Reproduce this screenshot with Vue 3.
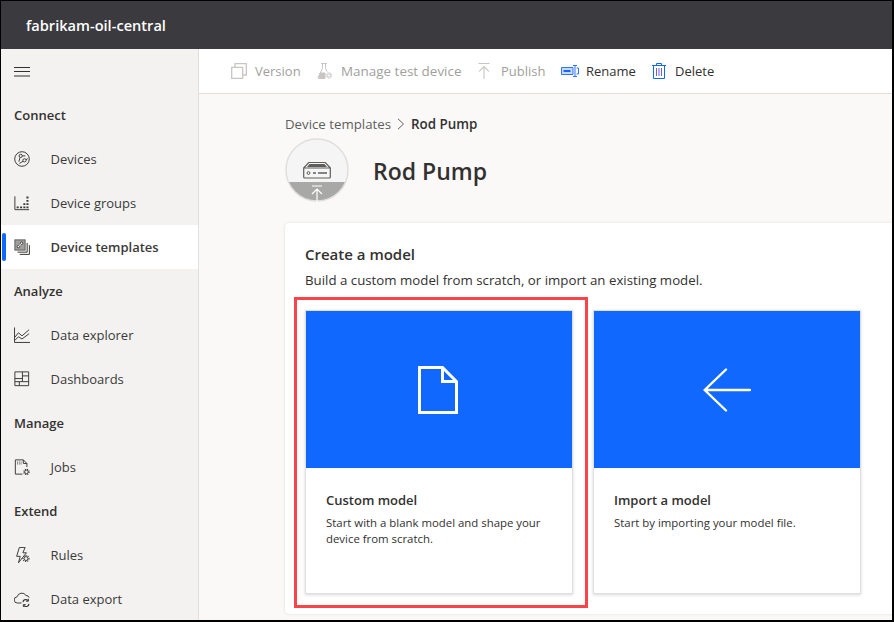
<script setup>
const sections = [
  { title: 'Connect', items: [
    { label: 'Devices', icon: 'devices' },
    { label: 'Device groups', icon: 'groups' },
    { label: 'Device templates', icon: 'templates', active: true }
  ]},
  { title: 'Analyze', items: [
    { label: 'Data explorer', icon: 'explorer' },
    { label: 'Dashboards', icon: 'dashboards' }
  ]},
  { title: 'Manage', items: [{ label: 'Jobs', icon: 'jobs' }] },
  { title: 'Extend', items: [
    { label: 'Rules', icon: 'rules' },
    { label: 'Data export', icon: 'export' }
  ]}
]
</script>

<template>
  <div class="frame">
    <header class="topbar"><span class="app-name">fabrikam-oil-central</span></header>
    <div class="body">
      <nav class="sidebar">
        <div class="row">
          <svg class="nav-icon menu-icon" viewBox="0 0 16 18" fill="none" stroke="#323130" stroke-width="1">
            <path d="M0 5.5h16M0 9.5h16M0 14h16" />
          </svg>
        </div>
        <template v-for="s in sections" :key="s.title">
          <div class="row section">{{ s.title }}</div>
          <div v-for="it in s.items" :key="it.label" class="row item" :class="{ active: it.active }">
            <svg class="nav-icon" viewBox="0 0 18 18" fill="none" stroke="#3b3a39" stroke-width="1.1">
              <g v-if="it.icon === 'devices'">
                <circle cx="9" cy="9" r="8.200" />
                <circle cx="7.500" cy="5.500" r="1.800" />
                <circle cx="11.800" cy="10.500" r="1.800" />
                <path d="M6.800 7.300 5.500 12M10.300 11.500 6 14M13.500 9.800 15.500 8.500M9.300 5.500h3.500" />
              </g>
              <g v-else-if="it.icon === 'groups'">
                <path d="M1 1.500v15h16" />
                <path d="M3 14h2.300M6.800 14h2.300M10.500 14h2.300M14 14h2.300M10.500 10.300h2.300M14 10.300h2.300M14 6.500h2.300M14 2.800h2.300" stroke-width="2" />
              </g>
              <g v-else-if="it.icon === 'templates'">
                <rect x="1" y="1" width="11.500" height="11.500" fill="#a19f9d" stroke="#605e5c" />
                <circle cx="5" cy="8.500" r="1.400" fill="#fff" />
                <circle cx="8.500" cy="4.800" r="1.400" fill="#fff" />
                <path d="M6 7.500 7.500 6" stroke="#fff" />
                <path d="M14.800 4.500v10.300H4M17.300 7v10.300H6.500" stroke="#323130" />
              </g>
              <g v-else-if="it.icon === 'explorer'">
                <path d="M.6 .5v16.900H18" />
                <path d="M1 11.500l4-5 4 3.500 8-7" />
                <path d="M1 15l4-4 4 2.500 8-6" />
              </g>
              <g v-else-if="it.icon === 'dashboards'">
                <path d="M1 1h15.500v15.500H1zM9.500 1v11M1 8.500h8.500M9.500 5.500h7M1 12h15.500M6 12v4.500" />
              </g>
              <g v-else-if="it.icon === 'jobs'">
                <path d="M1.500 17V1h9l4 4v4M1.500 17h8M10.500 1v4h4" />
                <path d="M3.500 3.500h5M3.500 5.500h5" stroke-dasharray="1 1" />
                <circle cx="14" cy="14.500" r="2" />
                <circle cx="14" cy="14.500" r="3" stroke-dasharray="1.300 1.100" stroke-width="1.200" />
              </g>
              <g v-else-if="it.icon === 'rules'">
                <path d="M6 .5h6.500L10 6.500h4L5 17.800l2-7.300H3z" />
                <circle cx="13.500" cy="13" r="3" fill="#f3f2f1" stroke="none" />
                <circle cx="13.500" cy="13" r="2.200" />
                <circle cx="13.500" cy="13" r="3.400" stroke-dasharray="1.300 1.200" stroke-width="1.200" />
              </g>
              <g v-else>
                <path d="M8.500 13.500H4a3.500 3.500 0 0 1-.5-7 5.500 5.500 0 0 1 10-1.500 3.500 3.500 0 0 1 3.500 2.500" />
                <path d="M10 12.500a3.200 3.200 0 0 1 5.800-1.500M16.800 14.500a3.200 3.200 0 0 1-5.800 1.700" stroke-width="1.300" />
                <path d="M16.200 8.800v2.700h-2.700M10.500 18v-2.700h2.700" />
              </g>
            </svg>
            <span>{{ it.label }}</span>
          </div>
        </template>
      </nav>

      <div class="content">
        <div class="toolbar">
          <div class="tool off tool-version">
            <svg class="tool-icon" viewBox="0 0 16 16" fill="none" stroke="#c8c6c4" stroke-width="1.300">
              <path d="M.7 4.300h11v11H.7zM4 4V.7h11.300V12H12" />
            </svg>
            <span>Version</span>
          </div>
          <div class="tool off tool-manage">
            <svg class="tool-icon" viewBox="0 0 16 16" fill="none" stroke="#c8c6c4" stroke-width="1">
              <path d="M4 .5h6M5.500 .5v5L1 14.500q0 1 1 1h6" />
              <path d="M8.500 .5v5l1.500 3" />
              <path d="M3 10h5v5.500H2z" fill="#c8c6c4" />
              <circle cx="12" cy="12.500" r="1.700" />
              <circle cx="12" cy="12.500" r="2.800" stroke-dasharray="1.200 1" />
            </svg>
            <span class="wide">Manage test device</span>
          </div>
          <div class="tool off tool-publish">
            <svg class="tool-icon tight" viewBox="0 0 16 16" fill="none" stroke="#c8c6c4" stroke-width="1.100">
              <path d="M.5 .5h11M6 16V3.500M1.200 8.300 6 3.500l4.800 4.800" />
            </svg>
            <span>Publish</span>
          </div>
          <div class="tool tool-rename">
            <svg class="tool-icon rename-icon" viewBox="0 0 18 12" fill="none" stroke="#2f74ff" stroke-width="1">
              <path d="M.5 2.500h11.500v7H.5z" fill="#c9d8ff" />
              <path d="M2.500 5h7v2h-7z" fill="#1168ff" stroke="none" />
              <path d="M12 .5h4M12 11.500h4M14 .5v11M15.500 3h2v6h-2" />
            </svg>
            <span>Rename</span>
          </div>
          <div class="tool tool-delete">
            <svg class="tool-icon tight" viewBox="0 0 16 16" fill="none" stroke="#1168ff" stroke-width="1">
              <path d="M0 2.500h14M4.500 2.500V.5h5v2M1.500 2.500v13h11v-13" />
              <path d="M4.500 5v8M7 5v8M9.500 5v8" stroke="#6b5cd8" />
            </svg>
            <span>Delete</span>
          </div>
        </div>

        <main class="page">
          <div class="crumbs">
            <span class="crumb-link">Device templates</span>
            <svg class="chevron" viewBox="0 0 8 12" fill="none" stroke="#605e5c" stroke-width="1"><path d="M1 .8 6.500 6 1 11.200" /></svg>
            <span class="crumb-current">Rod Pump</span>
          </div>
          <div class="heading">
            <svg class="avatar" viewBox="0 0 64 64">
              <defs><clipPath id="avatar-clip"><circle cx="32" cy="32" r="31" /></clipPath></defs>
              <circle cx="32" cy="32" r="31" fill="#f5f5f5" />
              <rect x="0" y="44" width="64" height="20" fill="#a8a8a6" clip-path="url(#avatar-clip)" />
              <circle cx="32" cy="32" r="31" fill="none" stroke="#e1dfdd" stroke-width="1.500" />
              <path d="M18.700 30h26.600v9q0 1-1 1H19.700q-1 0-1-1zM18.700 30l5-5.500h16.600l5 5.500" fill="none" stroke="#605e5c" stroke-width="1.200" />
              <path d="M24.500 26h15l2.500 3H22z" fill="#605e5c" />
              <circle cx="23.500" cy="35" r="1.400" fill="none" stroke="#605e5c" />
              <path d="M28 35h3M33 35h9" stroke="#605e5c" stroke-width="1.500" />
              <path d="M27 48h10M32 64V51M27 56l5-5 5 5" fill="none" stroke="#fff" stroke-width="1.200" />
            </svg>
            <h1>Rod Pump</h1>
          </div>

          <section class="card">
            <h2>Create a model</h2>
            <p class="lead">Build a custom model from scratch, or import an existing model.</p>
            <div class="tiles">
              <article class="tile">
                <div class="hero">
                  <svg class="hero-doc" viewBox="0 0 40 48" fill="none" stroke="#fff" stroke-width="3">
                    <path d="M1.500 1.500h23l14 14v31h-37zM24.500 1.500v14h14" />
                  </svg>
                </div>
                <div class="tile-body">
                  <h3>Custom model</h3>
                  <p>Start with a blank model and shape your device from scratch.</p>
                </div>
              </article>
              <article class="tile">
                <div class="hero">
                  <svg class="hero-arrow" viewBox="0 0 48 44" fill="none" stroke="#fff" stroke-width="2.400" stroke-linecap="round">
                    <path d="M23 1.500 1.700 22 23 42.500M2 22h45" />
                  </svg>
                </div>
                <div class="tile-body">
                  <h3>Import a model</h3>
                  <p>Start by importing your model file.</p>
                </div>
              </article>
            </div>
            <div class="highlight"></div>
          </section>
        </main>
      </div>
    </div>
  </div>
</template>

<style>
html, body { margin: 0; overflow: hidden; background: #000; }
</style>

<style scoped>
.frame {
  width: 894px;
  height: 622px;
  box-sizing: border-box;
  border: solid #000;
  border-width: 1px 2px 2px 1px;
  display: flex;
  flex-direction: column;
  overflow: hidden;
  font-family: "Open Sans", "Noto Sans", sans-serif;
  color: #323130;
  background: #faf9f8;
}
.topbar {
  flex: 0 0 48px;
  background: #3b3a3f;
  display: flex;
  align-items: center;
  padding-left: 25px;
}
.app-name {
  white-space: nowrap;
  color: #fff;
  font-size: 14.6px;
  font-weight: 600;
}
.body { flex: 1; display: flex; min-height: 0; }
.sidebar {
  flex: 0 0 198px;
  box-sizing: border-box;
  background: #f3f2f1;
  border-right: 1px solid #e1dfdd;
}
.row {
  height: 44px;
  display: flex;
  align-items: center;
  padding-left: 13px;
  position: relative;
  font-size: 13px;
}
.section { font-weight: 600; font-size: 13px; }
.item { color: #3b3a39; }
.item.active { background: #fff; font-weight: 600; }
.item.active::before {
  content: "";
  position: absolute;
  left: 1px;
  top: 8px;
  width: 4px;
  height: 28px;
  border-radius: 2px;
  background: #1168ff;
}
.nav-icon { width: 16px; height: 16px; flex: none; margin-right: 20.5px; }
.menu-icon { height: 18px; }
.content { flex: 1; min-width: 0; display: flex; flex-direction: column; }
.toolbar {
  flex: 0 0 44px;
  background: #fff;
  border-bottom: 1px solid #e1dfdd;
  display: flex;
  align-items: center;
  padding-left: 32px;
  font-size: 13px;
}
.tool { display: flex; align-items: center; white-space: nowrap; }
.tool-version { width: 86px; }
.tool-manage { width: 161px; }
.tool-publish { width: 83px; }
.tool-rename { width: 91px; }
.off { color: #a19f9d; }
.wide { font-size: 13.45px; }
.tool-icon { width: 16px; height: 16px; flex: none; margin-right: 8px; }
.tool-icon.tight { margin-right: 7px; }
.rename-icon { width: 18px; height: 12px; margin-right: 7px; }
.page { flex: 1; min-height: 0; padding: 20px 0 0 86px; display: flex; flex-direction: column; }
.crumbs { display: flex; align-items: center; height: 20px; font-size: 13.25px; }
.crumb-link { color: #605e5c; }
.chevron { width: 8px; height: 12px; margin: 0 6px; }
.crumb-current { font-weight: 600; font-size: 13.4px; }
.heading { display: flex; align-items: center; margin-top: 4px; }
.avatar { width: 64px; height: 64px; flex: none; margin-right: 24px; }
h1 { margin: 2px 0 0; font-size: 23px; font-weight: 600; }
.card {
  position: relative;
  margin-top: 21px;
  height: 391px;
  box-sizing: border-box;
  padding: 21px 0 0 20px;
  background: #fff;
  border-radius: 4px 0 0 4px;
  box-shadow: 0 0 3px rgba(0, 0, 0, .12);
}
h2 { margin: 0; font-size: 15px; line-height: 20px; font-weight: 600; }
.lead { margin: 6px 0 0; font-size: 13.27px; line-height: 20px; }
.tiles { display: flex; gap: 20px; margin-top: 20px; }
.tile {
  width: 268px;
  height: 284px;
  box-sizing: border-box;
  background: #fff;
  border: 1px solid #e1dfdd;
  box-shadow: 0 1px 3px rgba(0, 0, 0, .16);
}
.hero {
  height: 157px;
  background: #1168ff;
  display: flex;
  align-items: center;
  justify-content: center;
}
.hero-doc { width: 40px; height: 48px; margin-left: -3px; }
.hero-arrow { width: 48px; height: 44px; }
.tile-body { padding: 22px 20px 0; }
h3 { margin: 0; font-size: 13px; line-height: 20px; font-weight: 600; }
.tile-body p { margin: 5px 0 0; font-size: 11.4px; line-height: 16px; }
.highlight {
  position: absolute;
  left: 9px;
  top: 74px;
  width: 294px;
  height: 311px;
  box-sizing: border-box;
  border: 3px solid #f94449;
  pointer-events: none;
}
</style>
